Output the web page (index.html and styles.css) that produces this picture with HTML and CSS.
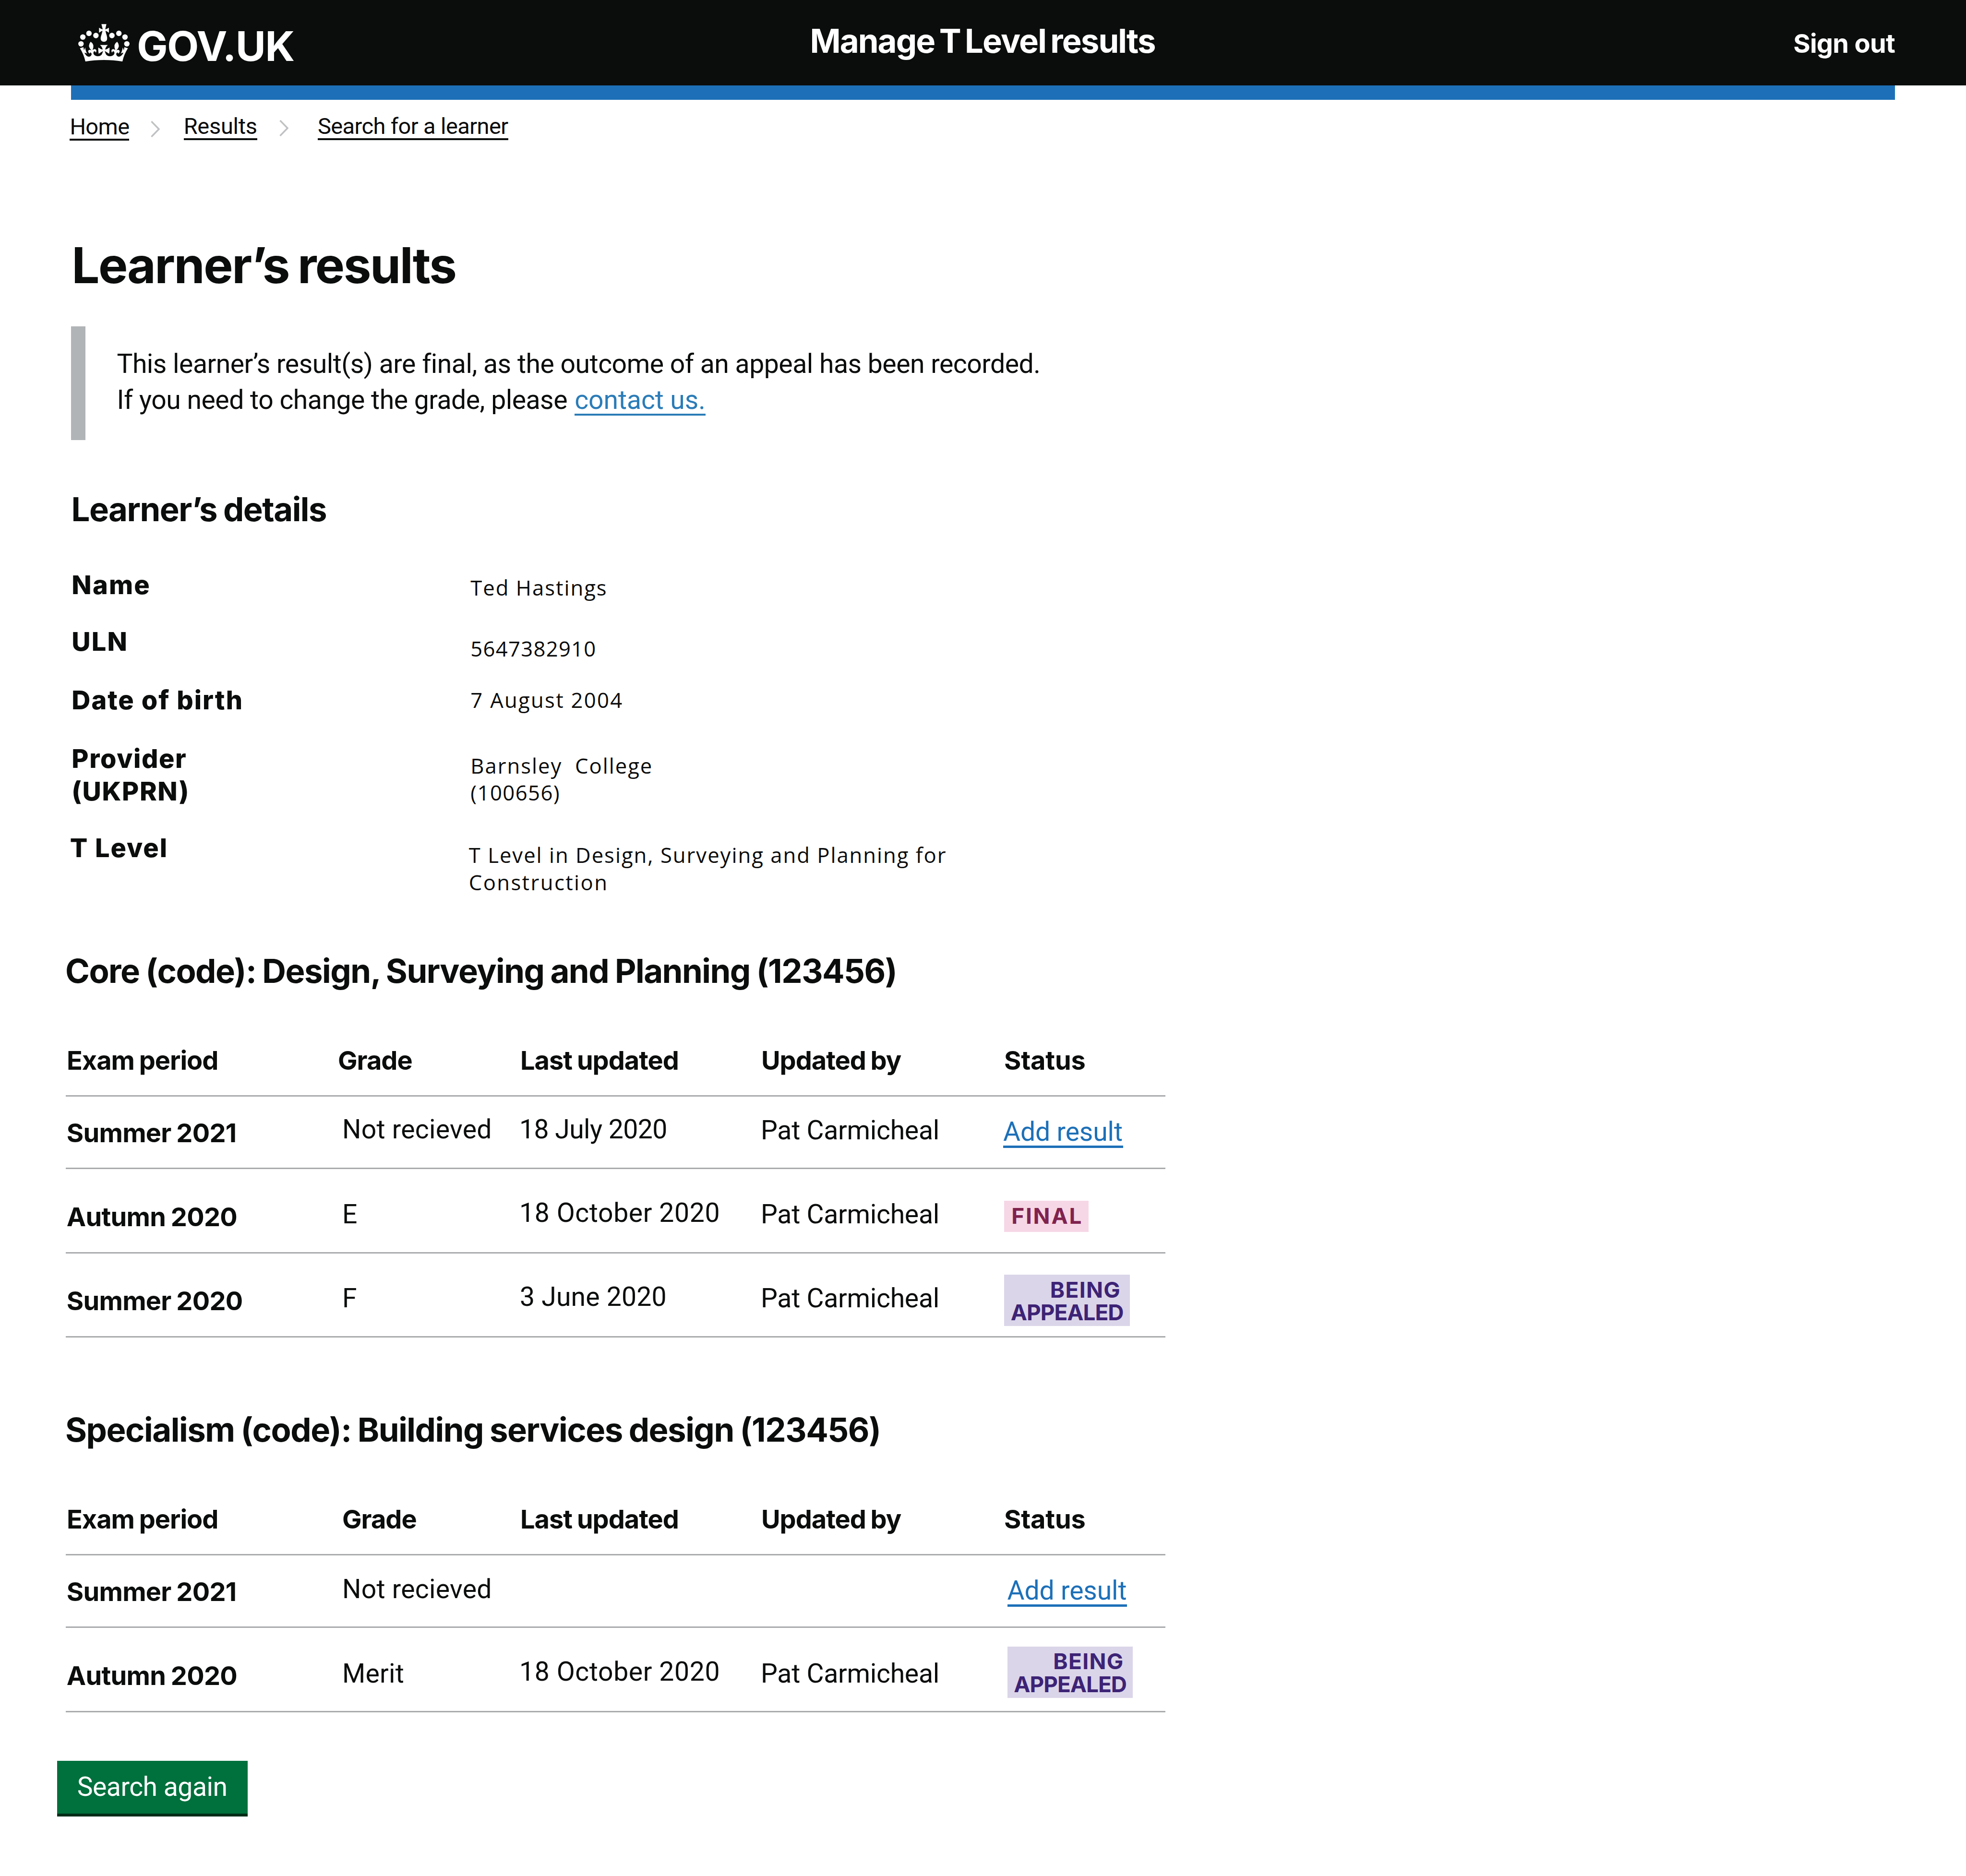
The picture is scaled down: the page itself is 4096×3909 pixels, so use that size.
FILE: index.html
```html
<!DOCTYPE html>
<html lang="en">
<head>
<meta charset="utf-8">
<title>Learner’s results – Manage T Level results – GOV.UK</title>
<link rel="stylesheet" href="styles.css">
</head>
<body>
<header class="header">
  <a class="logo" href="#">
    <svg class="crown" viewBox="60 50 432 316" aria-hidden="true">
      <defs>
        <g id="crown-half">
          <circle cx="83" cy="217" r="23"/>
          <circle cx="98.500" cy="160" r="23"/>
          <circle cx="150" cy="129" r="23"/>
          <circle cx="208.500" cy="147" r="23"/>
          <path d="M164 200Q151 216 150 235Q153 256 171 270H180Q190 250 187 230Q181 210 164 200Z"/>
          <path d="M277 353Q190 353 120 366Q108 308 74 254L104 245L108 272L118 248Q122 280 135 300Q123 292 112 291Q125 322 150 326Q172 322 173 302Q170 291 159 287Q161 297 154 299Q139 284 145 274Q152 262 167 270L182 268Q200 255 211 268Q216 284 206 291Q206 280 195 279Q185 284 188 300Q194 320 225 322Q258 320 264 292L269 277Q250 288 232 301Q227 275 229 248Q248 262 265 266Q263 244 243 227H277Z"/>
        </g>
      </defs>
      <use href="#crown-half"/>
      <use href="#crown-half" transform="matrix(-1 0 0 1 552 0)"/>
      <path d="M255 51H297L287 95Q303 91 318 81V124Q304 112 289 107Q293 130 300 148Q306 170 302 182A28 28 0 0 1 250 182Q246 170 253 148Q260 128 264 107Q249 112 235 124V81Q250 91 266 95Z"/>
    </svg>
    <span class="logo-text">GOV.UK</span>
  </a>
  <span class="service">Manage T Level results</span>
  <a class="sign-out" href="#">Sign out</a>
</header>
<div class="brand-bar"></div>

<nav class="breadcrumbs">
  <a class="crumb crumb-home" href="#">Home</a>
  <svg class="chevron chevron-first" viewBox="0 0 19 34"><path d="M1.500 1L17 17L1.500 33"/></svg>
  <a class="crumb crumb-results" href="#">Results</a>
  <svg class="chevron chevron-second" viewBox="0 0 19 34"><path d="M1.500 1L17 17L1.500 33"/></svg>
  <a class="crumb crumb-search" href="#">Search for a learner</a>
</nav>

<main class="main">
  <h1 class="title">Learner’s results</h1>
  <p class="inset">This learner’s result(s) are final, as the outcome of an appeal has been recorded.<br>If you need to change the grade, please <a class="contact" href="#">contact us.</a></p>

  <h2 class="heading heading-details">Learner’s details</h2>
  <dl class="details">
    <div class="detail detail-name"><dt>Name</dt><dd>Ted Hastings</dd></div>
    <div class="detail detail-uln"><dt>ULN</dt><dd>5647382910</dd></div>
    <div class="detail detail-dob"><dt>Date of birth</dt><dd>7 August 2004</dd></div>
    <div class="detail detail-provider"><dt>Provider<br>(UKPRN)</dt><dd>Barnsley  College<br><span class="provider-code">(100656)</span></dd></div>
    <div class="detail detail-tlevel"><dt>T Level</dt><dd>T Level in Design, Surveying and Planning for<br><span class="tlevel-end">Construction</span></dd></div>
  </dl>

  <section class="results results-core">
    <h2 class="heading">Core (code): Design, Surveying and Planning (123456)</h2>
    <div class="table">
      <div class="row row-head"><b>Exam period</b><b class="grade-head">Grade</b><b>Last updated</b><b>Updated by</b><b class="status-head">Status</b></div>
      <div class="row row-short"><b class="period">Summer 2021</b><span class="grade">Not recieved</span><span class="date">18 July 2020</span><span class="by">Pat Carmicheal</span><a class="add" href="#">Add result</a></div>
      <div class="row row-tall"><b class="period">Autumn 2020</b><span class="grade">E</span><span class="date date-october">18 October 2020</span><span class="by">Pat Carmicheal</span><strong class="tag tag-final">FINAL</strong></div>
      <div class="row row-last"><b class="period">Summer 2020</b><span class="grade">F</span><span class="date date-june">3 June 2020</span><span class="by">Pat Carmicheal</span><strong class="tag tag-appeal"><span class="being">BEING</span><span class="appealed">APPEALED</span></strong></div>
    </div>
  </section>

  <section class="results results-specialism">
    <h2 class="heading">Specialism (code): Building services design (123456)</h2>
    <div class="table">
      <div class="row row-head"><b>Exam period</b><b class="grade-head">Grade</b><b>Last updated</b><b>Updated by</b><b class="status-head">Status</b></div>
      <div class="row row-short"><b class="period">Summer 2021</b><span class="grade">Not recieved</span><span></span><span></span><a class="add" href="#">Add result</a></div>
      <div class="row row-tall"><b class="period">Autumn 2020</b><span class="grade">Merit</span><span class="date date-october">18 October 2020</span><span class="by">Pat Carmicheal</span><strong class="tag tag-appeal"><span class="being">BEING</span><span class="appealed">APPEALED</span></strong></div>
    </div>
  </section>

  <button class="button" type="button">Search again</button>
</main>
</body>
</html>
```
FILE: styles.css
```css
* { box-sizing: border-box; }

body {
  margin: 0;
  min-height: 3909px;
  background: #fff;
  color: #0b0c0c;
  font: 400 55.3px/64px Roboto, "Liberation Sans", sans-serif;
  white-space: nowrap;
}

h1, h2, p, dl, dt, dd { margin: 0; }
a { color: inherit; text-decoration: none; }

h1, h2, dt, b, strong, .logo-text, .service, .sign-out {
  font-family: Inter, "Liberation Sans", sans-serif;
  font-weight: 700;
}

/* Header */
.header {
  display: grid;
  grid-template-columns: 1fr auto 1fr;
  align-items: start;
  height: 178px;
  padding: 0 148px 0 163px;
  background: #0b0c0c;
  color: #fff;
}
.logo { display: flex; align-items: flex-start; }
.crown { width: 107px; height: 78.2px; margin-top: 49.6px; fill: #fff; }
.logo-text { margin: 51.4px 0 0 15.2px; font-size: 85.7px; line-height: 90px; letter-spacing: -1.35px; }
.service { margin: 44.6px 0 0 -17px; font-size: 68.8px; line-height: 80px; letter-spacing: -1.9px; word-spacing: -5px; }
.sign-out { justify-self: end; margin-top: 59px; font-size: 54.1px; letter-spacing: -0.7px; }
.brand-bar { height: 30px; margin: 0 148px; background: #1d70b8; }

/* Breadcrumbs */
.breadcrumbs {
  display: flex;
  align-items: flex-start;
  height: 285px;
  padding: 30px 0 0 145.4px;
  font-size: 47px;
  line-height: 50px;
}
.crumb { border-bottom: 4px solid #0b0c0c; letter-spacing: -0.6px; }
.crumb-home { width: 124px; margin-top: 1.4px; }
.crumb-results { width: 153.7px; letter-spacing: -0.3px; }
.crumb-search { width: 397px; }
.chevron { width: 19px; height: 34px; fill: none; stroke: #bfc1c3; stroke-width: 3.4; }
.chevron-first { margin: 14px 49.2px 0 45.1px; }
.chevron-second { margin: 12.3px 61.4px 0 45.2px; }

.main { display: flex; flex-direction: column; align-items: flex-start; }

.title { margin-left: 149.3px; font-size: 103.1px; line-height: 120px; letter-spacing: -2.5px; word-spacing: -4px; }

.inset {
  height: 237.4px;
  margin: 66.7px 0 0 148.4px;
  padding: 42.8px 0 0 65px;
  border-left: 30px solid #b1b4b6;
  line-height: 74.2px;
  letter-spacing: -0.49px;
}
.contact {
  display: inline-block;
  height: 69px;
  margin-left: 2px;
  border-bottom: 4px solid #2b7cb8;
  color: #2b7cb8;
  line-height: 74.2px;
  letter-spacing: -0.1px;
  vertical-align: top;
}

.heading { font-size: 68.8px; line-height: 80px; letter-spacing: -1.45px; word-spacing: -2px; }
.heading-details { margin: 104.2px 0 0 148.5px; letter-spacing: -1.5px; }
.results-core .heading { letter-spacing: -1.48px; }

/* Learner's details */
.details { margin: 83.2px 0 0 149.3px; }
.detail { display: grid; grid-template-columns: 831px auto; align-items: start; }
.detail dt { padding-top: 1px; font-size: 54.1px; font-weight: 800; line-height: 68px; letter-spacing: 1.6px; }
.detail dd {
  font: 400 43.6px/56.4px "Open Sans", "Noto Sans", sans-serif;
  letter-spacing: 2px;
  white-space: pre;
}
.detail-name { height: 117.8px; }
.detail-name dt { letter-spacing: 2.2px; }
.detail-name dd { padding-top: 11.1px; }
.detail-uln { height: 121.4px; }
.detail-uln dt { letter-spacing: 2.2px; }
.detail-uln dd { padding-top: 20.9px; letter-spacing: 1.3px; }
.detail-dob { height: 122.4px; }
.detail-dob dt { letter-spacing: 2px; }
.detail-dob dd { padding-top: 6.4px; letter-spacing: 2.3px; }
.detail-provider { height: 186.2px; }
.detail-provider dd { padding-top: 20.5px; }
.detail .provider-code { letter-spacing: 1.45px; }
.detail-tlevel { height: 250.7px; margin-left: -3.5px; }
.detail-tlevel dt { letter-spacing: 1.9px; }
.detail-tlevel dd { padding-top: 21.1px; }
.detail .tlevel-end { letter-spacing: 2.4px; }

/* Results tables */
.results { width: 2291px; margin-left: 137px; }
.results .heading { margin-left: -1px; }
.table { margin-top: 114px; }
.row {
  display: grid;
  grid-template-columns: 576px 369px 502px 508px 336px;
  align-items: start;
  border-bottom: 3px solid #a9abac;
}
.row b { font-size: 54.1px; }
.row-head { height: 108.2px; }
.row-head b { padding: 1px 0 0 2px; letter-spacing: -1px; word-spacing: -2px; }
.row-head .grade-head { padding-left: 0; }
.row-head .status-head { padding-left: 0; letter-spacing: -0.2px; }
.results-core .grade-head { margin-left: -9px; }
.row .period { padding-left: 1.8px; letter-spacing: -0.7px; word-spacing: -1.5px; }
.grade { letter-spacing: 0.25px; }
.date { letter-spacing: -0.55px; }
.date-october { letter-spacing: 0.6px; }
.date-june { padding-left: 1px; letter-spacing: 0.2px; }
.by { padding-left: 1px; letter-spacing: -0.25px; }

.row-short { height: 151px; }
.row-short .period { padding-top: 43.5px; }
.row-short .grade, .row-short .date { padding-top: 36.6px; }
.row-short .by { padding-top: 38.9px; }
.row-tall { height: 175.9px; }
.row-tall .period { padding-top: 68px; }
.row-tall .grade, .row-tall .by { padding-top: 63.2px; }
.row-tall .date { padding-top: 59.8px; }
.row-last { height: 174.7px; }
.row-last .period { padding-top: 67.5px; }
.row-last .grade, .row-last .by { padding-top: 62.5px; }
.row-last .date { padding-top: 59px; }

.add {
  justify-self: start;
  width: 249.700px;
  margin: 44.3px 0 0 -2px;
  padding-top: 1px;
  border-bottom: 5px solid #1d70b8;
  color: #1d70b8;
  line-height: 57px;
  letter-spacing: -0.14px;
}

.tag { justify-self: start; font-size: 45.9px; }
.tag-final {
  width: 175.8px;
  height: 65.3px;
  margin-top: 65.7px;
  padding-left: 15.2px;
  background: #f6d7e5;
  color: #80224d;
  line-height: 63px;
  letter-spacing: 2.8px;
}
.tag-appeal {
  display: flex;
  flex-direction: column;
  align-items: flex-end;
  width: 261.5px;
  height: 106.700px;
  margin-top: 44.3px;
  padding: 7.6px 13px 0 0;
  background: #dbd5e9;
  color: #3d2375;
  line-height: 47.4px;
}
.being { padding-right: 5.5px; letter-spacing: 1.33px; }
.appealed { letter-spacing: -1px; }

.results-specialism { margin-top: 152px; }
.results-specialism .row-short .period { padding-top: 43.8px; }
.results-specialism .row-short .grade { padding-top: 39.2px; }
.results-specialism .row-short { height: 151.5px; }
.results-specialism .add { margin-left: 6.5px; }
.results-specialism .row-tall { height: 175.3px; }
.results-specialism .tag { margin: 38.5px 0 0 6.5px; }

.button {
  width: 397.5px;
  height: 110px;
  margin: 101px 0 0 118.7px;
  padding: 23.6px 0 22.400px 42px;
  border: 0;
  background: #00703c;
  box-shadow: 0 6px 0 #002d18;
  color: #fff;
  font: inherit;
  letter-spacing: -0.5px;
  text-align: left;
}
```
